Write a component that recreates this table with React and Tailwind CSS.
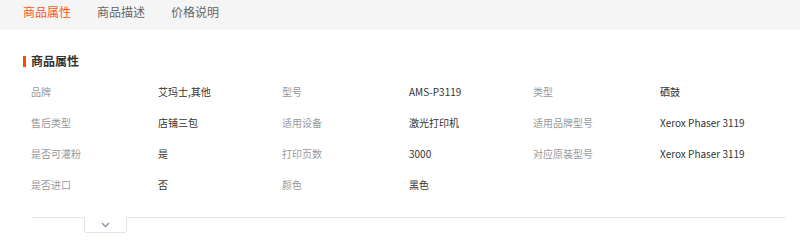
import React from 'react';

const tabs = ['商品属性', '商品描述', '价格说明'];

const rows = [
  [['品牌', '艾玛士,其他'], ['型号', 'AMS-P3119'], ['类型', '硒鼓']],
  [['售后类型', '店铺三包'], ['适用设备', '激光打印机'], ['适用品牌型号', 'Xerox Phaser 3119']],
  [['是否可灌粉', '是'], ['打印页数', '3000'], ['对应原装型号', 'Xerox Phaser 3119']],
  [['是否进口', '否'], ['颜色', '黑色']],
];

export default function App() {
  return (
    <div
      className="w-[800px] h-[245px] bg-white overflow-hidden"
      style={{ fontFamily: '"Noto Sans CJK SC", "Noto Sans", sans-serif' }}
    >
      <div className="h-[30px] bg-[#f5f5f5] flex items-start pt-[3px] pl-[23px] gap-[26px] text-[12px] leading-[18px]">
        {tabs.map((t, i) => (
          <span key={t} className={i === 0 ? 'text-[#ff5722]' : 'text-[#666]'}>
            {t}
          </span>
        ))}
      </div>

      <div className="pt-[22px] pl-[23px]">
        <div className="flex items-center h-[18px]">
          <span className="w-[3px] h-[11px] bg-[#ff4a00]" />
          <span className="ml-[5px] text-[12px] font-bold text-[#333]">商品属性</span>
        </div>
      </div>

      <div className="pl-[31px] pt-[6px]">
        {rows.map((row, r) => (
          <div key={r} className="flex h-[31px] items-center text-[10px]">
            {row.map(([k, v]) => (
              <div key={k} className="flex w-[251px]">
                <span className="w-[127px] text-[#999]">{k}</span>
                <span className="text-[#333]">{v}</span>
              </div>
            ))}
          </div>
        ))}
      </div>

      <div className="ml-[31px] mr-[14px] mt-[17px] border-t border-[#e8e8e8] relative">
        <div className="absolute left-[53px] top-[-1px] w-[43px] h-[16px] bg-white border border-t-0 border-[#e3e3e3] rounded-b-[3px] flex items-center justify-center">
          <svg width="9" height="6" viewBox="0 0 9 6" fill="none">
            <path d="M1 1l3.5 3.5L8 1" stroke="#8a8fa8" strokeWidth="1.3" />
          </svg>
        </div>
      </div>
    </div>
  );
}
